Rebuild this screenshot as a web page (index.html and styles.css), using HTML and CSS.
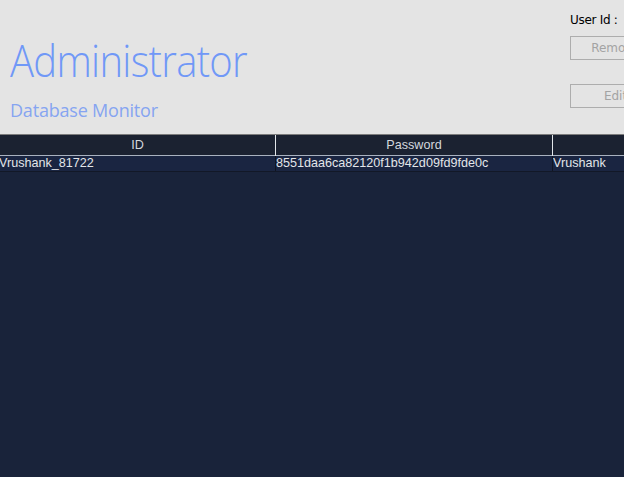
FILE: index.html
```html
<!DOCTYPE html>
<html>
<head>
<meta charset="utf-8">
<link rel="stylesheet" href="styles.css">
</head>
<body>
<div class="app">
  <header class="top">
    <div class="brand">
      <h1 class="title">Administrator</h1>
      <div class="subtitle">Database Monitor</div>
    </div>
    <div class="side">
      <div class="user-label">User Id :</div>
      <button class="btn btn-remove" disabled>Remove</button>
      <button class="btn btn-edit" disabled>Edit</button>
    </div>
  </header>
  <div class="grid">
    <div class="row head">
      <div class="cell">ID</div>
      <div class="cell">Password</div>
      <div class="cell">Name</div>
    </div>
    <div class="row data">
      <div class="cell first">Vrushank_81722</div>
      <div class="cell">8551daa6ca82120f1b942d09fd9fde0c</div>
      <div class="cell">Vrushank</div>
    </div>
  </div>
</div>
</body>
</html>
```

FILE: styles.css
```css
html, body {
  margin: 0;
  padding: 0;
  background: #19233a;
  overflow: hidden;
}
.app {
  width: 624px;
  height: 477px;
  overflow: hidden;
}
.top {
  height: 134px;
  background: #e4e4e4;
  border-bottom: 1px solid #7c7c7c;
  display: grid;
  grid-template-columns: 570px 120px;
  overflow: hidden;
}
.brand {
  padding-left: 10px;
  padding-top: 36px;
}
.title {
  margin: 0;
  font-family: "Open Sans", sans-serif;
  font-weight: 300;
  font-size: 40px;
  line-height: 54px;
  color: #7098f7;
  letter-spacing: -0.7px;
  transform: scaleY(1.08);
  transform-origin: left bottom;
}
.subtitle {
  margin-top: 8px;
  font-family: "Open Sans", sans-serif;
  font-weight: 400;
  font-size: 18px;
  line-height: 24px;
  color: #86a4f1;
  letter-spacing: -0.2px;
}
.side {
  display: flex;
  flex-direction: column;
  align-items: flex-start;
  padding-top: 12px;
}
.user-label {
  font-family: "DejaVu Sans", sans-serif;
  font-size: 12px;
  line-height: 16px;
  color: #000;
  letter-spacing: -0.3px;
}
.btn {
  width: 91px;
  height: 24px;
  box-sizing: border-box;
  border: 1px solid #adadad;
  background: #e4e4e4;
  color: #a3a3a3;
  font-family: "DejaVu Sans", sans-serif;
  font-size: 12px;
  padding: 0;
  margin: 0;
  text-align: center;
}
.btn-remove { margin-top: 8px; }
.btn-edit { margin-top: 24px; }
.grid {
  font-family: "Liberation Sans", Arial, sans-serif;
  font-size: 12.6px;
}
.row {
  display: grid;
  grid-template-columns: 276px 277px 400px;
}
.head {
  height: 20px;
  background: #1b2231;
  border-bottom: 1px solid #a9b2bf;
  color: #d4d8de;
}
.head .cell {
  text-align: center;
  line-height: 21px;
  border-right: 1px solid #e2e6ea;
}
.data {
  height: 15px;
  background: #1a2541;
  border-bottom: 1px solid #121827;
  color: #e3e6ea;
}
.data .cell {
  line-height: 15px;
  border-right: 1px solid #101622;
  white-space: nowrap;
  overflow: hidden;
}
.data .first {
  margin-left: -1px;
}
.cell {
  box-sizing: border-box;
}
```
